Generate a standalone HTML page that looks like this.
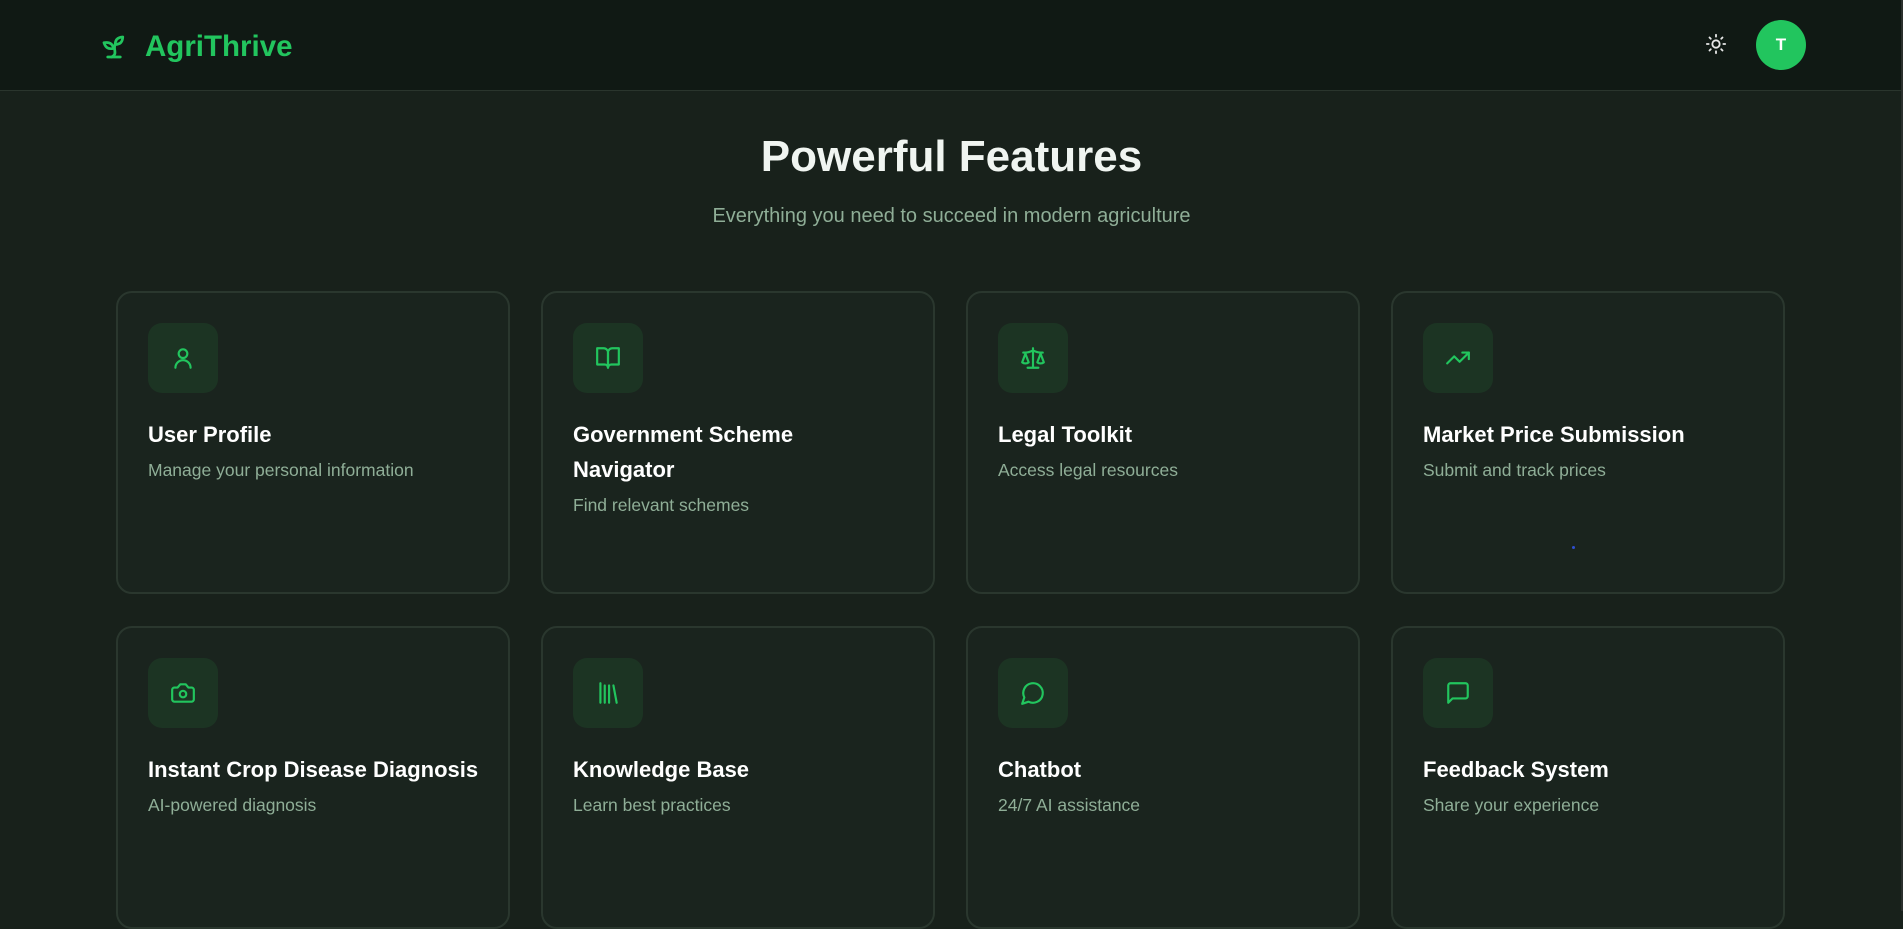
<!DOCTYPE html>
<html><head><meta charset="utf-8"><style>
*{box-sizing:border-box;margin:0;padding:0}
body{width:1903px;height:911px;overflow:hidden;background:#18211b;font-family:"Liberation Sans",sans-serif;position:relative}
.hdr{position:absolute;left:0;top:0;width:1901px;height:91px;background:#101914;border-bottom:1px solid #2a352d}
.logo{position:absolute;left:99px;top:30px;display:flex;align-items:center;gap:16px;color:#22c55e;font-weight:bold;font-size:29.5px}
.sun{position:absolute;left:1705px;top:33px}
.av{position:absolute;left:1756px;top:20px;width:50px;height:50px;border-radius:50%;background:#22c55e;color:#fff;font-size:17px;font-weight:bold;display:flex;align-items:center;justify-content:center}
.sb{position:absolute;right:0;top:0;width:2px;height:911px;background:#2a2f2c}
h1{position:absolute;left:0;width:1903px;top:132px;text-align:center;color:#f0f5f1;font-size:44px;font-weight:bold}
.sub{position:absolute;left:0;width:1903px;top:205px;text-align:center;color:#8fae97;font-size:20px}
.card{position:absolute;width:394px;height:303px;border:2px solid #2a372e;border-radius:16px;background:#1a241e;padding:30px}
.ib{width:70px;height:70px;border-radius:14px;background:#1c3423;display:flex;align-items:center;justify-content:center}
.t{margin-top:24px;color:#fff;font-size:22px;font-weight:bold;line-height:35px;white-space:nowrap}
.d{margin-top:6px;color:#8fae97;font-size:17.5px;line-height:24px}
</style></head><body>
<div class="hdr">
 <div class="logo"><svg width="30" height="30" viewBox="0 0 24 24" fill="none" stroke="#22c55e" stroke-width="2.2" stroke-linecap="round" stroke-linejoin="round"><path d="M7 20h10"/><path d="M10 20c5.5-2.5.8-6.4 3-10"/><path d="M9.5 9.4c1.1.8 1.8 2.2 2.3 3.7-2 .4-3.5.4-4.8-.3-1.2-.6-2.3-1.9-3-4.2 2.8-.5 4.4 0 5.5.8z"/><path d="M14.1 6a7 7 0 0 0-1.1 4c1.9-.1 3.3-.6 4.3-1.4 1-1 1.6-2.3 1.7-4.6-2.7.1-4 1-4.9 2z"/></svg>AgriThrive</div>
 <svg class="sun" width="22" height="22" viewBox="0 0 24 24" fill="none" stroke="#e8e8e8" stroke-width="2" stroke-linecap="round"><circle cx="12" cy="12" r="4"/><path d="M12 2v2M12 20v2M4.9 4.9l1.4 1.4M17.7 17.7l1.4 1.4M2 12h2M20 12h2M6.3 17.7l-1.4 1.4M19.1 4.9l-1.4 1.4"/></svg>
 <div class="av">T</div>
</div>
<div class="sb"></div>
<h1>Powerful Features</h1>
<div class="sub">Everything you need to succeed in modern agriculture</div>

<div class="card" style="left:116px;top:291px"><div class="ib"><svg width="26" height="26" viewBox="0 0 24 24" fill="none" stroke="#22c55e" stroke-width="2" stroke-linecap="round"><circle cx="12" cy="8" r="4"/><path d="M5 21a7 7 0 0 1 14 0"/></svg></div><div class="t">User Profile</div><div class="d">Manage your personal information</div></div>
<div class="card" style="left:541px;top:291px"><div class="ib"><svg width="26" height="26" viewBox="0 0 24 24" fill="none" stroke="#22c55e" stroke-width="2" stroke-linecap="round" stroke-linejoin="round"><path d="M2 3h6a4 4 0 0 1 4 4v14a3 3 0 0 0-3-3H2z"/><path d="M22 3h-6a4 4 0 0 0-4 4v14a3 3 0 0 1 3-3h7z"/></svg></div><div class="t">Government Scheme<br>Navigator</div><div class="d">Find relevant schemes</div></div>
<div class="card" style="left:966px;top:291px"><div class="ib"><svg width="26" height="26" viewBox="0 0 24 24" fill="none" stroke="#22c55e" stroke-width="2" stroke-linecap="round" stroke-linejoin="round"><path d="M16 16l3-8 3 8c-.9.7-1.9 1-3 1s-2.1-.3-3-1z"/><path d="M2 16l3-8 3 8c-.9.7-1.9 1-3 1s-2.1-.3-3-1z"/><path d="M7 21h10M12 3v18M3 7h2c2 0 5-1 7-2 2 1 5 2 7 2h2"/></svg></div><div class="t">Legal Toolkit</div><div class="d">Access legal resources</div></div>
<div class="card" style="left:1391px;top:291px"><div class="ib"><svg width="26" height="26" viewBox="0 0 24 24" fill="none" stroke="#22c55e" stroke-width="2" stroke-linecap="round" stroke-linejoin="round"><path d="M22 7l-8.5 8.5-5-5L2 17"/><path d="M16 7h6v6"/></svg></div><div class="t">Market Price Submission</div><div class="d">Submit and track prices</div></div>
<div style="position:absolute;left:1572px;top:546px;width:3px;height:3px;border-radius:50%;background:#2f4fd0"></div>

<div class="card" style="left:116px;top:626px"><div class="ib"><svg width="26" height="26" viewBox="0 0 24 24" fill="none" stroke="#22c55e" stroke-width="2" stroke-linecap="round" stroke-linejoin="round"><path d="M14.5 4h-5L7 7H4a2 2 0 0 0-2 2v9a2 2 0 0 0 2 2h16a2 2 0 0 0 2-2V9a2 2 0 0 0-2-2h-3z"/><circle cx="12" cy="13" r="3"/></svg></div><div class="t">Instant Crop Disease Diagnosis</div><div class="d">AI-powered diagnosis</div></div>
<div class="card" style="left:541px;top:626px"><div class="ib"><svg width="26" height="26" viewBox="0 0 24 24" fill="none" stroke="#22c55e" stroke-width="2" stroke-linecap="round"><path d="M5 3v18M9 5v16M13 5v16M17 5l3 16"/></svg></div><div class="t">Knowledge Base</div><div class="d">Learn best practices</div></div>
<div class="card" style="left:966px;top:626px"><div class="ib"><svg width="26" height="26" viewBox="0 0 24 24" fill="none" stroke="#22c55e" stroke-width="2" stroke-linecap="round" stroke-linejoin="round"><path d="M7.9 20A9 9 0 1 0 4 16.1L2 22z"/></svg></div><div class="t">Chatbot</div><div class="d">24/7 AI assistance</div></div>
<div class="card" style="left:1391px;top:626px"><div class="ib"><svg width="26" height="26" viewBox="0 0 24 24" fill="none" stroke="#22c55e" stroke-width="2" stroke-linecap="round" stroke-linejoin="round"><path d="M21 15a2 2 0 0 1-2 2H7l-4 4V5a2 2 0 0 1 2-2h14a2 2 0 0 1 2 2z"/></svg></div><div class="t">Feedback System</div><div class="d">Share your experience</div></div>
</body></html>
